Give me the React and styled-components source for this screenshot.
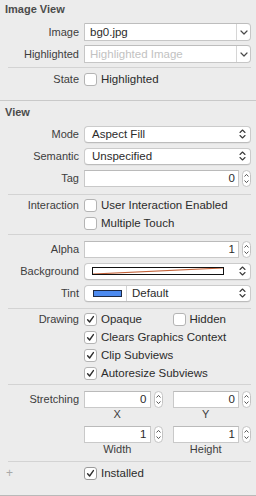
import React from "react";
import styled, { createGlobalStyle } from "styled-components";

const GlobalStyle = createGlobalStyle`
  html, body { margin: 0; padding: 0; background: #ececec; }
  body { font-family: "Liberation Sans", Arial, sans-serif; font-size: 11px; color: #3a3a3a; }
  * { box-sizing: border-box; }
`;

const Panel = styled.div`
  width: 256px;
  height: 496px;
  background: #ececec;
  display: flex;
  flex-direction: column;
  border-bottom: 1px solid #b9b9b9;
  overflow: hidden;
`;

const Section = styled.div`
  display: flex;
  flex-direction: column;
  padding-bottom: ${(p) => p.$pb || 0}px;
  border-bottom: ${(p) => (p.$divider ? "1px solid #c9c9c9" : "none")};
`;

const Header = styled.div`
  height: 18px;
  line-height: 18px;
  padding-left: 5px;
  margin-top: ${(p) => p.$mt || 0}px;
  margin-bottom: ${(p) => p.$mb || 0}px;
  font-weight: bold;
  color: #4b4b4b;
`;

const Row = styled.div`
  display: grid;
  grid-template-columns: 79px 1fr;
  column-gap: 5px;
  align-items: center;
  height: ${(p) => p.$h || 22}px;
  margin-top: ${(p) => p.$mt || 0}px;
  padding-right: 5px;
`;

const Label = styled.div`
  text-align: right;
  color: #3d3d3d;
  white-space: nowrap;
`;

const Separator = styled.div`
  height: 1px;
  background: #d3d3d3;
  margin: ${(p) => p.$mt || 0}px 5px 0 8px;
`;

const Combo = styled.div`
  display: flex;
  height: 18px;
  background: #fff;
  border: 1px solid #c6c6c6;
  border-top-color: #bdbdbd;
  border-radius: 0 4px 4px 0;
`;

const ComboText = styled.div`
  flex: 1;
  padding-left: 5px;
  line-height: 16px;
  font-size: 11.5px;
  color: ${(p) => (p.$placeholder ? "#c2c2c2" : "#2b2b2b")};
  white-space: nowrap;
  overflow: hidden;
`;

const ComboButton = styled.div`
  width: 14px;
  border-left: 1px solid #d6d6d6;
  display: flex;
  align-items: center;
  justify-content: center;
`;

const PopUp = styled.div`
  display: flex;
  align-items: center;
  height: 17px;
  background: #fff;
  border: 1px solid #cbcbcb;
  border-bottom-color: #bcbcbc;
  border-radius: 4px;
  box-shadow: 0 0.5px 0.5px rgba(0, 0, 0, 0.08);
  padding-left: ${(p) => (p.$flush ? 0 : 7)}px;
  padding-right: 4px;
`;

const PopText = styled.div`
  flex: 1;
  font-size: 11.5px;
  color: #2b2b2b;
  white-space: nowrap;
`;

const FieldGroup = styled.div`
  display: flex;
  align-items: center;
  gap: 3px;
`;

const NumField = styled.div`
  flex: 1;
  height: 17px;
  background: #fff;
  border: 1px solid #c9c9c9;
  border-top-color: #bababa;
  text-align: right;
  padding-right: 3px;
  line-height: 15px;
  font-size: 11.5px;
  color: #2b2b2b;
`;

const StepperBox = styled.div`
  width: 9px;
  height: 17px;
  border: 1px solid #c4c4c4;
  border-radius: 5px;
  background: #fff;
  display: flex;
  align-items: center;
  justify-content: center;
`;

const CheckLine = styled.div`
  display: flex;
  align-items: center;
  gap: 4px;
  color: #2b2b2b;
  font-size: 11.5px;
  white-space: nowrap;
`;

const Box = styled.div`
  width: 13px;
  height: 13px;
  border: 1px solid ${(p) => (p.$dark ? "#9a9a9a" : "#b4b4b4")};
  border-radius: 3px;
  background: #fff;
  display: flex;
  align-items: center;
  justify-content: center;
  flex: none;
`;

const Pair = styled.div`
  display: grid;
  grid-template-columns: 1fr 1fr;
  column-gap: 10px;
  align-items: center;
`;

const Caption = styled.div`
  text-align: center;
  padding-right: 12px;
  color: #3d3d3d;
  line-height: 8px;
`;

const Well = styled.div`
  position: relative;
  flex: 1;
  height: 8px;
  margin-right: 15px;
  border: 1px solid #111;
  background: #fff;
  & > svg { position: absolute; inset: 0; width: 100%; height: 100%; }
`;

const Swatch = styled.div`
  width: 29px;
  height: 7px;
  margin: 0 4px 0 8px;
  background: #4d8bf0;
  border: 1px solid #1e2a44;
`;

const WellDivider = styled.div`
  width: 1px;
  align-self: stretch;
  background: #d3d3d3;
  margin-right: 5px;
`;

const Plus = styled.div`
  text-align: left;
  padding-left: 6px;
  color: #a8a8a8;
  font-size: 12px;
`;

const ChevronDown = () => (
  <svg width="8" height="5" viewBox="0 0 8 5">
    <path d="M1 1 L4 4 L7 1" fill="none" stroke="#4a4a4a" strokeWidth="1.2" strokeLinecap="round" strokeLinejoin="round" />
  </svg>
);

const UpDown = () => (
  <svg width="7" height="10" viewBox="0 0 7 10">
    <path d="M1 3.5 L3.5 1 L6 3.5 M1 6.5 L3.5 9 L6 6.5" fill="none" stroke="#3c3c3c" strokeWidth="1.1" strokeLinecap="round" strokeLinejoin="round" />
  </svg>
);

const StepIcon = () => (
  <svg width="5" height="11" viewBox="0 0 5 11">
    <path d="M0.8 3.2 L2.5 1.4 L4.2 3.2 M0.8 7.8 L2.5 9.6 L4.2 7.8" fill="none" stroke="#555" strokeWidth="1" strokeLinecap="round" strokeLinejoin="round" />
  </svg>
);

const Tick = () => (
  <svg width="9" height="9" viewBox="0 0 9 9">
    <path d="M1.6 4.8 L3.6 7 L7.4 1.6" fill="none" stroke="#2e2e2e" strokeWidth="1.4" strokeLinecap="round" strokeLinejoin="round" />
  </svg>
);

const Checkbox = ({ checked, label, dark }) => (
  <CheckLine>
    <Box $dark={dark}>{checked && <Tick />}</Box>
    {label}
  </CheckLine>
);

const Num = ({ value }) => (
  <FieldGroup>
    <NumField>{value}</NumField>
    <StepperBox>
      <StepIcon />
    </StepperBox>
  </FieldGroup>
);

const ComboBox = ({ value, placeholder }) => (
  <Combo>
    <ComboText $placeholder={!value}>{value || placeholder}</ComboText>
    <ComboButton>
      <ChevronDown />
    </ComboButton>
  </Combo>
);

const Select = ({ children, flush }) => (
  <PopUp $flush={flush}>
    {children}
    <UpDown />
  </PopUp>
);

export default function App() {
  return (
    <>
      <GlobalStyle />
      <Panel>
        <Section $divider $pb={12}>
          <Header $mb={3}>Image View</Header>
          <Row>
            <Label>Image</Label>
            <ComboBox value="bg0.jpg" />
          </Row>
          <Row>
            <Label>Highlighted</Label>
            <ComboBox placeholder="Highlighted Image" />
          </Row>
          <Separator $mt={2} />
          <Row $h={18} $mt={2}>
            <Label>State</Label>
            <Checkbox label="Highlighted" />
          </Row>
        </Section>

        <Section>
          <Header $mt={2} $mb={2}>View</Header>
          <Row>
            <Label>Mode</Label>
            <Select>
              <PopText>Aspect Fill</PopText>
            </Select>
          </Row>
          <Row>
            <Label>Semantic</Label>
            <Select>
              <PopText>Unspecified</PopText>
            </Select>
          </Row>
          <Row>
            <Label>Tag</Label>
            <Num value="0" />
          </Row>
          <Separator $mt={5} />
          <Row $h={18} $mt={1}>
            <Label>Interaction</Label>
            <Checkbox label="User Interaction Enabled" />
          </Row>
          <Row $h={18}>
            <Label />
            <Checkbox label="Multiple Touch" />
          </Row>
          <Separator $mt={2} />
          <Row $mt={3}>
            <Label>Alpha</Label>
            <Num value="1" />
          </Row>
          <Row>
            <Label>Background</Label>
            <Select>
              <Well>
                <svg viewBox="0 0 100 10" preserveAspectRatio="none">
                  <path d="M0 10 L100 0" stroke="#c4633a" strokeWidth="1.2" vectorEffect="non-scaling-stroke" fill="none" />
                </svg>
              </Well>
            </Select>
          </Row>
          <Row>
            <Label>Tint</Label>
            <Select flush>
              <Swatch />
              <WellDivider />
              <PopText>Default</PopText>
            </Select>
          </Row>
          <Separator $mt={4} />
          <Row $h={18} $mt={1}>
            <Label>Drawing</Label>
            <Pair>
              <Checkbox checked label="Opaque" />
              <Checkbox label="Hidden" />
            </Pair>
          </Row>
          <Row $h={18}>
            <Label />
            <Checkbox checked label="Clears Graphics Context" />
          </Row>
          <Row $h={18}>
            <Label />
            <Checkbox checked label="Clip Subviews" />
          </Row>
          <Row $h={18}>
            <Label />
            <Checkbox checked label="Autoresize Subviews" />
          </Row>
          <Separator $mt={2} />
          <Row $mt={3}>
            <Label>Stretching</Label>
            <Pair>
              <Num value="0" />
              <Num value="0" />
            </Pair>
          </Row>
          <Row $h={8}>
            <Label />
            <Pair>
              <Caption>X</Caption>
              <Caption>Y</Caption>
            </Pair>
          </Row>
          <Row $mt={5}>
            <Label />
            <Pair>
              <Num value="1" />
              <Num value="1" />
            </Pair>
          </Row>
          <Row $h={8}>
            <Label />
            <Pair>
              <Caption>Width</Caption>
              <Caption>Height</Caption>
            </Pair>
          </Row>
          <Separator $mt={8} />
          <Row $h={18} $mt={2}>
            <Plus>+</Plus>
            <Checkbox checked dark label="Installed" />
          </Row>
        </Section>
      </Panel>
    </>
  );
}
